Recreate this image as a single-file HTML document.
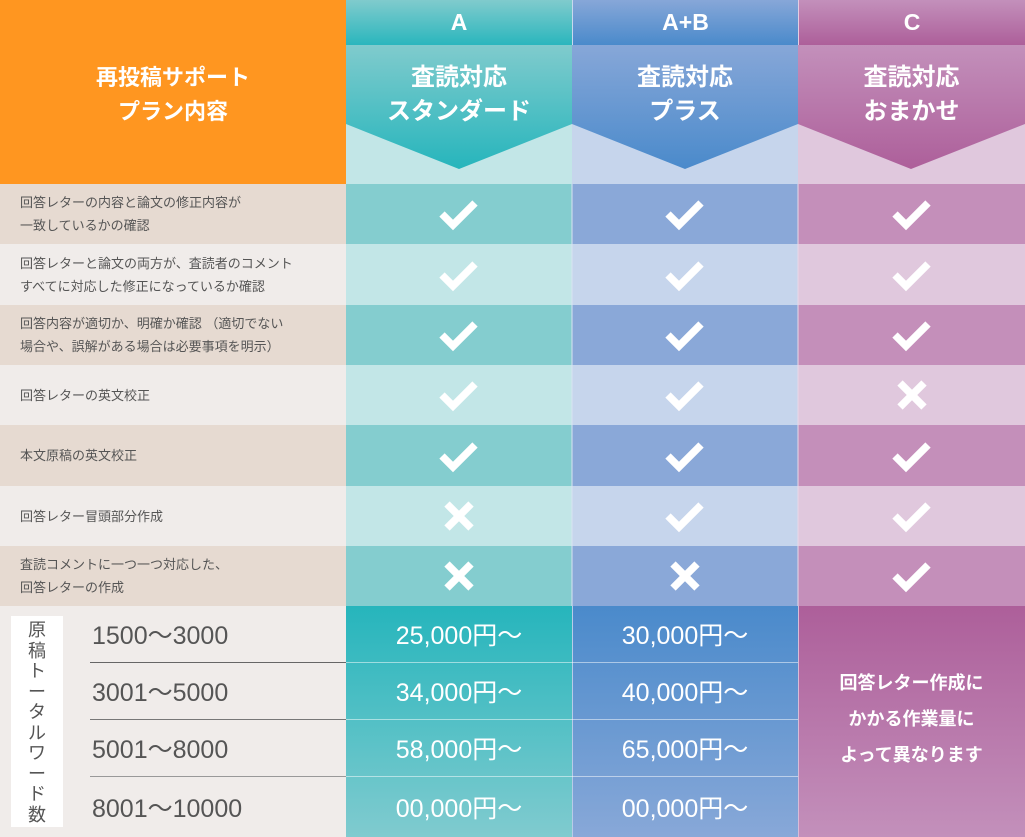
<!DOCTYPE html>
<html><head><meta charset="utf-8"><style>
*{margin:0;padding:0;box-sizing:border-box}
body{width:1025px;height:837px;position:relative;overflow:hidden;background:#f0ecea;font-family:"Liberation Sans","Noto Sans CJK JP",sans-serif}
.a{position:absolute}
.hl{left:0;top:0;width:346px;height:184px;background:#ff9620;color:#fff;font-weight:bold;font-size:22px;line-height:34px;text-align:center;padding-top:61px}
.top{top:0;height:45px;color:#fff;font-weight:bold;font-size:23px;text-align:center;line-height:45px}
.hd{top:45px;height:139px}
.hd svg{position:absolute;left:0;top:0}
.hd div{position:absolute;left:0;right:0;top:16px;color:#fff;font-weight:bold;font-size:24px;line-height:34px;text-align:center}
.lbl{left:0;width:346px;color:#555;font-size:13px;line-height:23px;padding-left:20px;display:flex;align-items:center}
.pr{color:#fff;font-size:25px;display:flex;align-items:center;justify-content:center;border-bottom:1px solid rgba(255,255,255,.5)}
.rg{left:90px;color:#555;font-size:25px;width:256px;padding-left:2px;display:flex;align-items:center}
</style></head><body>
<div class="a hl">再投稿サポート<br>プラン内容</div>

<div class="a top" style="left:346px;width:226px;background:linear-gradient(#80cbcd,#2ab6bd)">A</div>
<div class="a top" style="left:572px;width:226px;background:linear-gradient(#87a7d8,#4a8acb);border-left:1px solid #c8d8ee">A+B</div>
<div class="a top" style="left:798px;width:227px;background:linear-gradient(#c390bb,#ad5f9a);border-left:1px solid #e4cde2">C</div>

<div class="a hd" style="left:346px;width:226px;background:#c2e6e7">
<svg width="226" height="139"><defs><linearGradient id="ga" x1="0" y1="0" x2="0" y2="1"><stop offset="0" stop-color="#80cbcd"/><stop offset="1" stop-color="#26b5bc"/></linearGradient></defs><polygon points="0,0 226,0 226,79 113,124 0,79" fill="url(#ga)"/></svg>
<div>査読対応<br>スタンダード</div></div>
<div class="a hd" style="left:572px;width:226px;background:#c6d5ec">
<svg width="226" height="139"><defs><linearGradient id="gb" x1="0" y1="0" x2="0" y2="1"><stop offset="0" stop-color="#87a7d8"/><stop offset="1" stop-color="#4a8acb"/></linearGradient></defs><polygon points="0,0 226,0 226,79 113,124 0,79" fill="url(#gb)"/></svg>
<div>査読対応<br>プラス</div></div>
<div class="a hd" style="left:798px;width:227px;background:#e0c8dd">
<svg width="227" height="139"><defs><linearGradient id="gc" x1="0" y1="0" x2="0" y2="1"><stop offset="0" stop-color="#c390bb"/><stop offset="1" stop-color="#ad5f9a"/></linearGradient></defs><polygon points="0,0 227,0 227,79 113,124 0,79" fill="url(#gc)"/></svg>
<div>査読対応<br>おまかせ</div></div>

<div class="a lbl" style="top:184px;height:60px;background:#e6dad1">回答レターの内容と論文の修正内容が<br>一致しているかの確認</div>
<div class="a lbl" style="top:244px;height:61px;background:#f0ecea">回答レターと論文の両方が、査読者のコメント<br>すべてに対応した修正になっているか確認</div>
<div class="a lbl" style="top:305px;height:60px;background:#e6dad1">回答内容が適切か、明確か確認 （適切でない<br>場合や、誤解がある場合は必要事項を明示）</div>
<div class="a lbl" style="top:365px;height:60px;background:#f0ecea">回答レターの英文校正</div>
<div class="a lbl" style="top:425px;height:61px;background:#e6dad1">本文原稿の英文校正</div>
<div class="a lbl" style="top:486px;height:60px;background:#f0ecea">回答レター冒頭部分作成</div>
<div class="a lbl" style="top:546px;height:60px;background:#e6dad1">査読コメントに一つ一つ対応した、<br>回答レターの作成</div>

<svg class="a" style="left:346px;top:184px" width="679" height="422">
<defs>
<path id="ck" d="M-17 0 L-6 11 L16 -11" fill="none" stroke="#fff" stroke-width="7.5"/>
<path id="cx" d="M-12 -12 L12 12 M12 -12 L-12 12" fill="none" stroke="#fff" stroke-width="7.5"/>
</defs>
<rect x="0" y="0" width="226" height="60" fill="#84cdcf"/><rect x="226" y="0" width="226" height="60" fill="#8aa8d8"/><rect x="452" y="0" width="227" height="60" fill="#c48fba"/>
<rect x="0" y="60" width="226" height="61" fill="#c2e6e7"/><rect x="226" y="60" width="226" height="61" fill="#c6d5ec"/><rect x="452" y="60" width="227" height="61" fill="#e0c8dd"/>
<rect x="0" y="121" width="226" height="60" fill="#84cdcf"/><rect x="226" y="121" width="226" height="60" fill="#8aa8d8"/><rect x="452" y="121" width="227" height="60" fill="#c48fba"/>
<rect x="0" y="181" width="226" height="60" fill="#c2e6e7"/><rect x="226" y="181" width="226" height="60" fill="#c6d5ec"/><rect x="452" y="181" width="227" height="60" fill="#e0c8dd"/>
<rect x="0" y="241" width="226" height="61" fill="#84cdcf"/><rect x="226" y="241" width="226" height="61" fill="#8aa8d8"/><rect x="452" y="241" width="227" height="61" fill="#c48fba"/>
<rect x="0" y="302" width="226" height="60" fill="#c2e6e7"/><rect x="226" y="302" width="226" height="60" fill="#c6d5ec"/><rect x="452" y="302" width="227" height="60" fill="#e0c8dd"/>
<rect x="0" y="362" width="226" height="60" fill="#84cdcf"/><rect x="226" y="362" width="226" height="60" fill="#8aa8d8"/><rect x="452" y="362" width="227" height="60" fill="#c48fba"/>
<line x1="226" y1="0" x2="226" y2="422" stroke="#d8e4f2" stroke-width="1"/>
<line x1="452" y1="0" x2="452" y2="422" stroke="#e8d8e8" stroke-width="1"/>
<use href="#ck" x="113" y="30"/><use href="#ck" x="339" y="30"/><use href="#ck" x="566" y="30"/>
<use href="#ck" x="113" y="91"/><use href="#ck" x="339" y="91"/><use href="#ck" x="566" y="91"/>
<use href="#ck" x="113" y="151"/><use href="#ck" x="339" y="151"/><use href="#ck" x="566" y="151"/>
<use href="#ck" x="113" y="211"/><use href="#ck" x="339" y="211"/><use href="#cx" x="566" y="211"/>
<use href="#ck" x="113" y="272"/><use href="#ck" x="339" y="272"/><use href="#ck" x="566" y="272"/>
<use href="#cx" x="113" y="332"/><use href="#ck" x="339" y="332"/><use href="#ck" x="566" y="332"/>
<use href="#cx" x="113" y="392"/><use href="#cx" x="339" y="392"/><use href="#ck" x="566" y="392"/>
</svg>

<div class="a" style="left:11px;top:616px;width:52px;height:211px;background:#fff;color:#555;font-size:18px;line-height:20.5px;text-align:center;padding-top:4px">原<br>稿<br>ト<br>ー<br>タ<br>ル<br>ワ<br>ー<br>ド<br>数</div>
<div class="a rg" style="top:606px;height:57px;border-bottom:1px solid #666">1500～3000</div>
<div class="a rg" style="top:663px;height:57px;border-bottom:1px solid #777">3001～5000</div>
<div class="a rg" style="top:720px;height:57px;border-bottom:1px solid #999">5001～8000</div>
<div class="a rg" style="top:777px;height:60px">8001～10000</div>

<div class="a" style="left:346px;top:606px;width:226px;height:231px;background:linear-gradient(#26b5bc,#80cbcf)"></div>
<div class="a" style="left:572px;top:606px;width:226px;height:231px;background:linear-gradient(#4a8acb,#88a8d8);border-left:1px solid #b8cbe8"></div>
<div class="a" style="left:798px;top:606px;width:227px;height:231px;background:linear-gradient(#ad5f9a,#c390bb);border-left:1px solid #d8bcd8"></div>

<div class="a pr" style="left:346px;top:606px;width:226px;height:57px">25,000円～</div>
<div class="a pr" style="left:346px;top:663px;width:226px;height:57px">34,000円～</div>
<div class="a pr" style="left:346px;top:720px;width:226px;height:57px">58,000円～</div>
<div class="a pr" style="left:346px;top:777px;width:226px;height:60px;border:none">00,000円～</div>
<div class="a pr" style="left:572px;top:606px;width:226px;height:57px">30,000円～</div>
<div class="a pr" style="left:572px;top:663px;width:226px;height:57px">40,000円～</div>
<div class="a pr" style="left:572px;top:720px;width:226px;height:57px">65,000円～</div>
<div class="a pr" style="left:572px;top:777px;width:226px;height:60px;border:none">00,000円～</div>
<div class="a" style="left:798px;top:665px;width:227px;color:#fff;font-weight:bold;font-size:18px;line-height:36px;text-align:center">回答レター作成に<br>かかる作業量に<br>よって異なります</div>
</body></html>
